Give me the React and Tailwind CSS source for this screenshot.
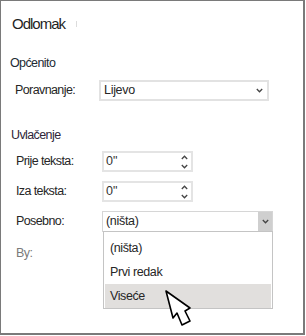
import React from "react";

const font = { fontFamily: '"Liberation Sans", Arial, sans-serif' };

const Chevron = ({ up = false, className = "" }) => (
  <svg width="7" height="5" viewBox="0 0 7 5" className={className}>
    <polyline
      points={up ? "0.8,4 3.5,1.2 6.2,4" : "0.8,1 3.5,3.8 6.2,1"}
      fill="none"
      stroke="#444"
      strokeWidth="1.3"
    />
  </svg>
);

const Label = ({ children, w = "w-[86px]", muted = false }) => (
  <div className={`${w} shrink-0 text-[12.5px] tracking-[-0.6px] ${muted ? "text-[#7a7a7a]" : "text-[#262626]"}`}>
    {children}
  </div>
);

const Spinner = ({ value }) => (
  <div className="w-[91px] h-[21px] border-2 border-[#e4e4e4] flex items-center justify-between pl-[2px] pr-[3px]">
    <span className="text-[12.5px] text-[#333]">{value}</span>
    <div className="flex flex-col gap-[4px]">
      <Chevron up />
      <Chevron />
    </div>
  </div>
);

const options = ["(ništa)", "Prvi redak", "Viseće"];

export default function App() {
  return (
    <div className="relative w-[306px] h-[336px] bg-white" style={font}>
      <div className="w-[305px] h-[335px] border-t border-l border-r-2 border-b-2 border-[#7a7a7a] flex flex-col">
        <div className="mt-[13px] pl-[11px] h-[20px] flex items-center">
          <span className="text-[15px] tracking-[-1px] text-[#1f1f1f]">Odlomak</span>
          <span className="ml-[11px] w-px h-[6px] bg-[#dcdcdc]" />
        </div>

        <div className="mt-[21px] pl-[9px] h-[16px] leading-[16px] text-[12.5px] tracking-[-0.6px] text-[#222a33]">
          Općenito
        </div>

        <div className="mt-[9px] pl-[14px] flex items-center">
          <Label w="w-[84px]">Poravnanje:</Label>
          <div className="w-[170px] h-[21px] border-2 border-[#e2e2e2] flex items-center justify-between pl-[3px] pr-[4px]">
            <span className="text-[12.5px] tracking-[-0.3px] text-[#262626]">Lijevo</span>
            <Chevron />
          </div>
        </div>

        <div className="mt-[26px] pl-[10px] h-[16px] leading-[16px] text-[12.5px] tracking-[-0.6px] text-[#2e2538]">
          Uvlačenje
        </div>

        <div className="mt-[8px] pl-[15px] flex items-center">
          <Label>Prije teksta:</Label>
          <Spinner value={'0"'} />
        </div>

        <div className="mt-[9px] pl-[15px] flex items-center">
          <Label>Iza teksta:</Label>
          <Spinner value={'0"'} />
        </div>

        <div className="mt-[9px] pl-[15px] flex items-center">
          <Label>Posebno:</Label>
          <div className="relative w-[171px] h-[21px] border border-[#d6d6d6] flex items-stretch">
            <div className="flex-1 flex items-center pl-[3px] text-[12.5px] tracking-[-0.3px] text-[#262626]">(ništa)</div>
            <div className="w-[14px] bg-[#cfcfcf] flex items-center justify-center">
              <Chevron />
            </div>
            <div className="absolute left-0 top-full w-[170px] h-[78px] bg-white border border-[#c4c4c4] pt-[4px] pl-px pr-px z-10">
              {options.map((o, i) => (
                <div
                  key={o}
                  className={`h-[24px] flex items-center pl-[5px] text-[12.5px] tracking-[-0.4px] text-[#262626] ${i === 2 ? "bg-[#e1dfdd]" : ""}`}
                >
                  {o}
                </div>
              ))}
            </div>
          </div>
        </div>

        <div className="mt-[13px] pl-[15px] h-[16px] flex items-center">
          <Label muted>By:</Label>
        </div>
      </div>

      <svg
        className="absolute left-[164px] top-[289px] z-20"
        width="30"
        height="40"
        viewBox="0 0 30 40"
      >
        <polygon
          points="2,2 9,29 13,24 18,36 26,32 21,22 26,19"
          fill="white"
          stroke="black"
          strokeWidth="1.6"
          strokeLinejoin="round"
        />
      </svg>
    </div>
  );
}
